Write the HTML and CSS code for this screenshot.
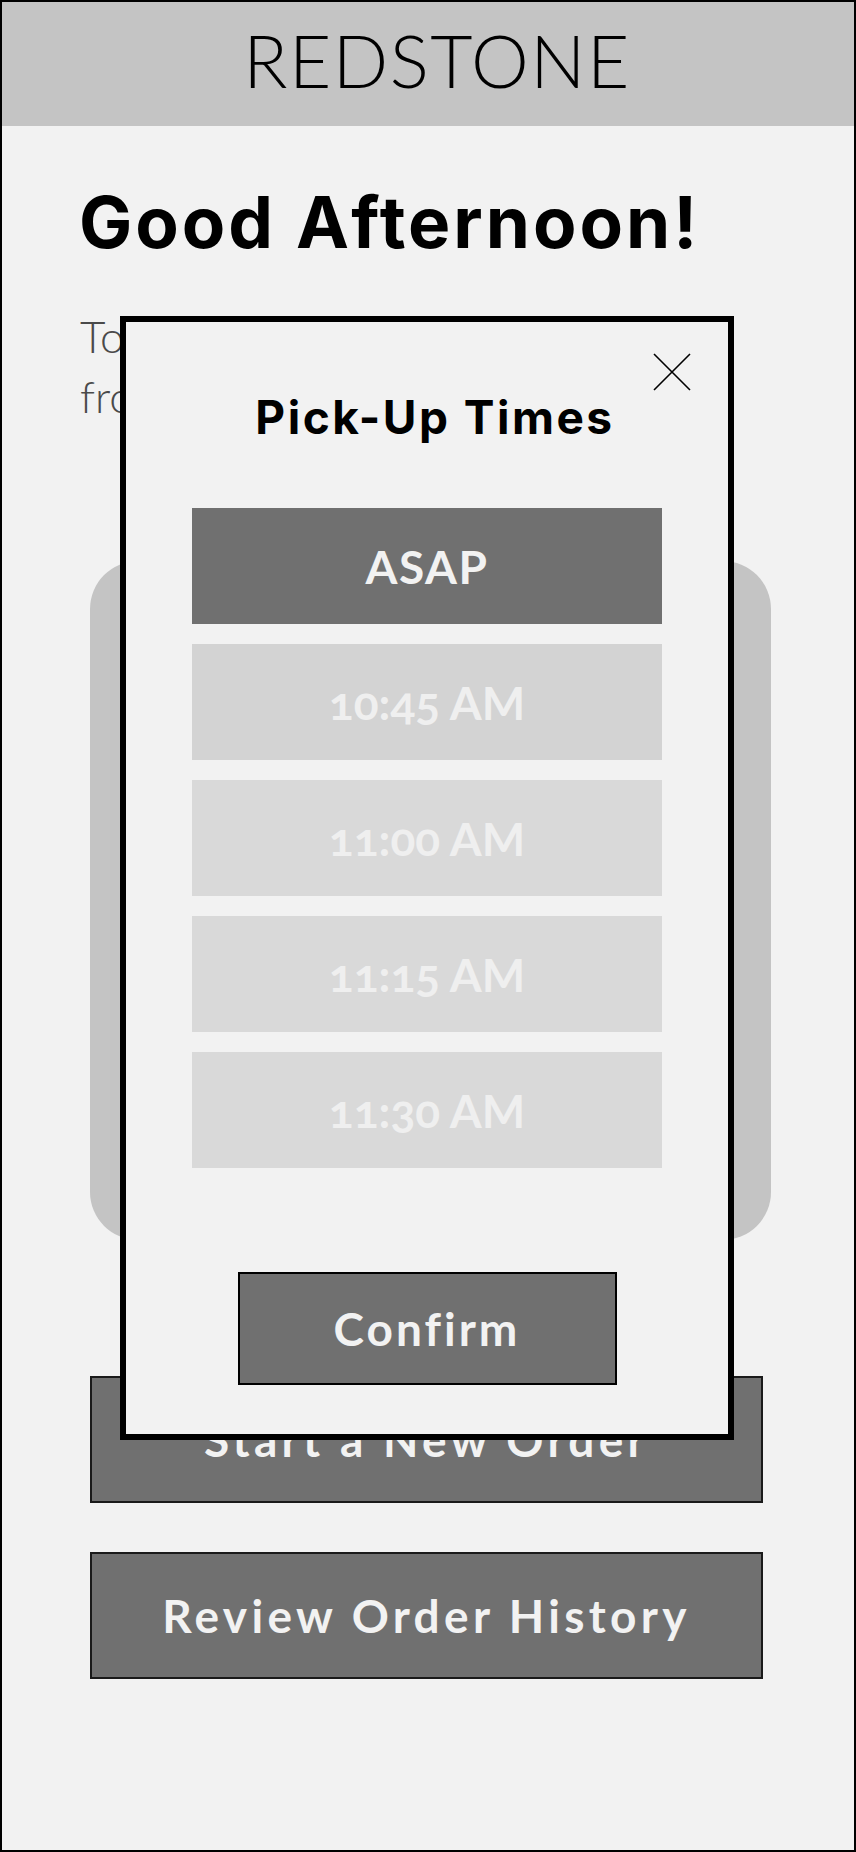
FILE: index.html
```html
<!DOCTYPE html>
<html>
<head>
    <meta charset="UTF-8">
    <meta name="viewport" content="width=device-width, initial-scale=1.0">
    <title>Redstone</title>
    <link rel="stylesheet" href="styles.css">
</head>
<body>
    <div class="screen">
        <header class="topbar">
            <span class="brand">REDSTONE</span>
        </header>

        <main class="home">
            <h1 class="greeting">Good Afternoon!</h1>
            <p class="intro">Today's specials<br>from us</p>

            <div class="feature-card"></div>

            <div class="actions">
                <button class="action-btn">Start a New Order</button>
                <button class="action-btn">Review Order History</button>
            </div>
        </main>

        <!-- 取餐时间弹窗 -->
        <div class="modal">
            <button class="modal-close" aria-label="Close">
                <svg width="40" height="40" viewBox="0 0 40 40">
                    <path d="M2 2 L38 38 M38 2 L2 38" stroke="#000" stroke-width="1.6" fill="none"/>
                </svg>
            </button>
            <h2 class="modal-title">Pick-Up Times</h2>
            <div class="time-list">
                <button class="time-option selected">ASAP</button>
                <button class="time-option first">10:45 AM</button>
                <button class="time-option">11:00 AM</button>
                <button class="time-option">11:15 AM</button>
                <button class="time-option">11:30 AM</button>
            </div>
            <button class="confirm-btn">Confirm</button>
        </div>
    </div>
</body>
</html>
```

FILE: styles.css
```css
body {
    margin: 0;
    padding: 0;
    background-color: #f2f2f2;
}
.screen {
    position: relative;
    box-sizing: border-box;
    width: 856px;
    height: 1852px;
    border: 2px solid #000;
    background-color: #f2f2f2;
    display: flex;
    flex-direction: column;
    overflow: hidden;
}
.topbar {
    box-sizing: border-box;
    height: 124px;
    padding: 0 0 8px 18px;
    background-color: #c4c4c4;
    display: flex;
    justify-content: center;
    align-items: center;
}
.brand {
    font-family: Lato, "Liberation Sans", sans-serif;
    font-weight: 300;
    font-size: 73px;
    line-height: 1;
    color: #000;
    letter-spacing: 1.5px;
}
.home {
    display: flex;
    flex-direction: column;
}
.greeting {
    font-family: Inter, "Liberation Sans", sans-serif;
    font-weight: 700;
    font-size: 71px;
    line-height: 72px;
    letter-spacing: 3px;
    color: #000;
    margin: 60px 0 0 77px;
}
.intro {
    font-family: Lato, "Liberation Sans", sans-serif;
    font-weight: 300;
    font-size: 44px;
    line-height: 60px;
    color: #4a4a4a;
    margin: 48px 0 0 78px;
}
.feature-card {
    width: 681px;
    height: 679px;
    margin: 135px 0 0 88px;
    background-color: #c4c4c4;
    border-radius: 48px;
}
.actions {
    display: flex;
    flex-direction: column;
    gap: 49px;
    margin: 136px 0 0 88px;
}
.action-btn,
.confirm-btn,
.time-option {
    font-family: Lato, "Liberation Sans", sans-serif;
    font-weight: 700;
    color: #f2f2f2;
    border: none;
    cursor: pointer;
    padding: 0;
    font-variant-numeric: oldstyle-nums;
}
.action-btn {
    width: 673px;
    height: 127px;
    background-color: #707070;
    border: 2px solid #1a1a1a;
    font-size: 46px;
    letter-spacing: 4.3px;
}
.modal {
    position: absolute;
    left: 118px;
    top: 314px;
    box-sizing: border-box;
    width: 614px;
    height: 1124px;
    border: 6px solid #000;
    background-color: #f2f2f2;
    display: flex;
    flex-direction: column;
    align-items: center;
}
.modal-close {
    position: absolute;
    left: 526px;
    top: 30px;
    width: 40px;
    height: 40px;
    padding: 0;
    border: none;
    background: none;
    cursor: pointer;
}
.modal-title {
    font-family: Inter, "Liberation Sans", sans-serif;
    font-weight: 700;
    font-size: 46px;
    line-height: 50px;
    letter-spacing: 2.5px;
    color: #000;
    margin: 70px 0 0 16px;
}
.time-list {
    display: flex;
    flex-direction: column;
    gap: 20px;
    margin-top: 66px;
}
.time-option {
    width: 470px;
    height: 116px;
    background-color: #d9d9d9;
    font-size: 46px;
    color: #efefef;
}
.time-option.first {
    background-color: #d3d3d3;
}
.time-option.selected {
    background-color: #707070;
    color: #f2f2f2;
    letter-spacing: 1.5px;
}
.confirm-btn {
    width: 379px;
    height: 113px;
    margin-top: 104px;
    background-color: #707070;
    border: 2px solid #000;
    font-size: 46px;
    letter-spacing: 3px;
}
```
